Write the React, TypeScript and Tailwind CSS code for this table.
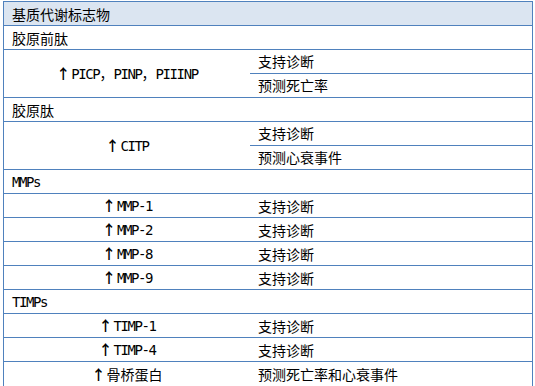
const mono = "font-['DejaVu_Sans_Mono',monospace] text-[14px] tracking-[-1.4px]";

function Latin({ children }: { children: React.ReactNode }) {
  return <span className={mono}>{children}</span>;
}

function Arrow() {
  return <span className="font-bold mr-[1px]">↑</span>;
}

function GroupRow({ label }: { label: React.ReactNode }) {
  return (
    <div className="h-[24px] flex items-center pl-[8px] border-b border-[#4f81bd]">
      {label}
    </div>
  );
}

function SingleRow({ left, right }: { left: React.ReactNode; right: string }) {
  return (
    <div className="h-[24px] flex border-b border-[#4f81bd] last:border-b-0">
      <div className="w-[246px] flex items-center justify-center">{left}</div>
      <div className="flex-1 flex items-center pl-[8px]">{right}</div>
    </div>
  );
}

function DoubleRow({ left, rights }: { left: React.ReactNode; rights: string[] }) {
  return (
    <div className="h-[48px] flex border-b border-[#4f81bd]">
      <div className="w-[246px] flex items-center justify-center">{left}</div>
      <div className="flex-1 flex flex-col">
        {rights.map((r, i) => (
          <div
            key={r}
            className={`h-[24px] flex items-center pl-[8px] ${
              i === 0 ? "border-b border-[#4f81bd]" : ""
            }`}
          >
            {r}
          </div>
        ))}
      </div>
    </div>
  );
}

export default function App() {
  return (
    <div className="bg-white w-[535px] h-[386px] pt-[1px] pl-[3px] font-['Noto_Sans_CJK_SC',sans-serif] text-[14px] text-black leading-none">
      <div className="w-[530px] border border-[#4f81bd]">
        {/* Header */}
        <div className="h-[24px] flex items-center pl-[8px] bg-[#dbe5f1] border-b border-[#4f81bd]">
          基质代谢标志物
        </div>

        <GroupRow label="胶原前肽" />
        <DoubleRow
          left={
            <span>
              <Arrow />
              <Latin>PICP</Latin>，<Latin>PINP</Latin>，<Latin>PIIINP</Latin>
            </span>
          }
          rights={["支持诊断", "预测死亡率"]}
        />

        <GroupRow label="胶原肽" />
        <DoubleRow
          left={
            <span>
              <Arrow />
              <Latin>CITP</Latin>
            </span>
          }
          rights={["支持诊断", "预测心衰事件"]}
        />

        <GroupRow label={<Latin>MMPs</Latin>} />
        {["MMP-1", "MMP-2", "MMP-8", "MMP-9"].map((m) => (
          <SingleRow
            key={m}
            left={
              <span>
                <Arrow />
                <Latin>{m}</Latin>
              </span>
            }
            right="支持诊断"
          />
        ))}

        <GroupRow label={<Latin>TIMPs</Latin>} />
        {["TIMP-1", "TIMP-4"].map((m) => (
          <SingleRow
            key={m}
            left={
              <span>
                <Arrow />
                <Latin>{m}</Latin>
              </span>
            }
            right="支持诊断"
          />
        ))}
        <SingleRow
          left={
            <span>
              <Arrow />
              骨桥蛋白
            </span>
          }
          right="预测死亡率和心衰事件"
        />
      </div>
    </div>
  );
}
